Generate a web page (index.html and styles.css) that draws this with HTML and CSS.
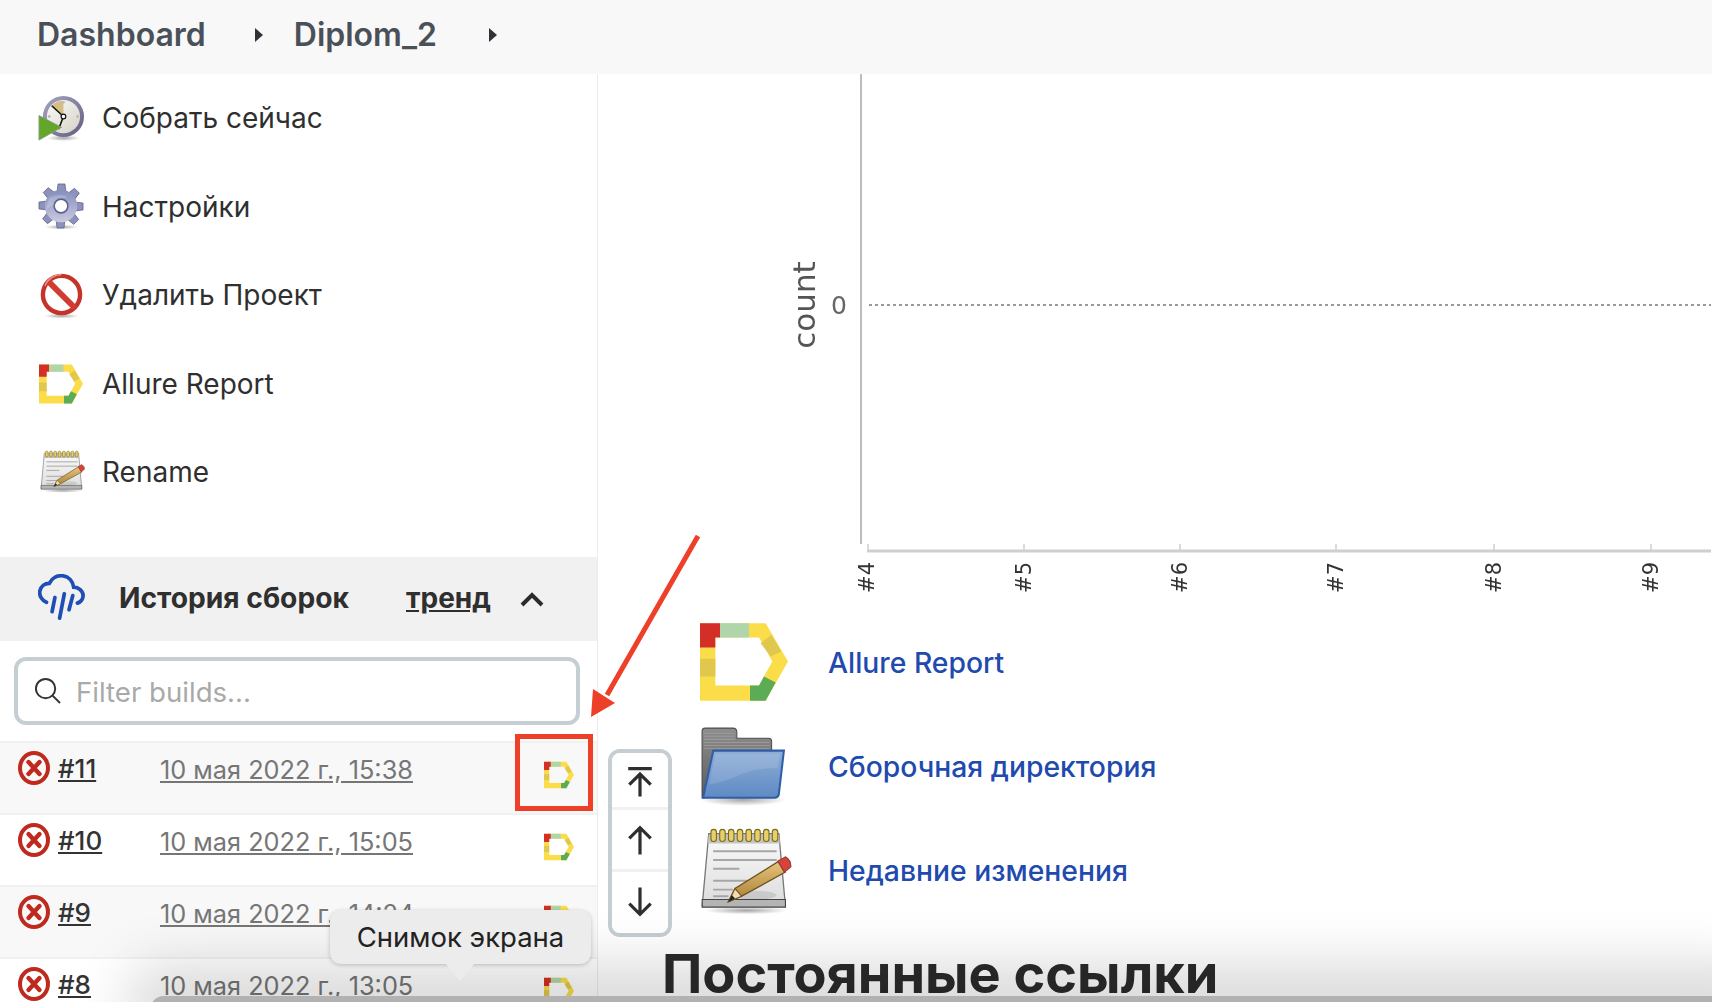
FILE: index.html
```html
<!DOCTYPE html>
<html lang="ru">
<head>
<meta charset="utf-8">
<title>Diplom_2</title>
<link rel="stylesheet" href="styles.css">
</head>
<body>
<svg class="defs" width="0" height="0" aria-hidden="true">
  <defs>
    <linearGradient id="gFace" x1="0" y1="0" x2="1" y2="1"><stop offset="0" stop-color="#fbfbf8"/><stop offset="1" stop-color="#d5d2c6"/></linearGradient>
    <linearGradient id="gRing" x1="0" y1="0" x2="1" y2="1"><stop offset="0" stop-color="#a9a6c4"/><stop offset="1" stop-color="#5f5c80"/></linearGradient>
    <linearGradient id="gGear" x1="0" y1="0" x2="0" y2="1"><stop offset="0" stop-color="#858fba"/><stop offset=".55" stop-color="#aaaed2"/><stop offset="1" stop-color="#cbc9dc"/></linearGradient>
    <linearGradient id="gPaper" x1="0" y1="0" x2="0" y2="1"><stop offset="0" stop-color="#fafafa"/><stop offset="1" stop-color="#dcdcdc"/></linearGradient>
    <linearGradient id="gPencil" x1="0" y1="0" x2="0" y2="1"><stop offset="0" stop-color="#e8c47c"/><stop offset="1" stop-color="#a97f35"/></linearGradient>
    <linearGradient id="gFolder" x1="0" y1="0" x2="0" y2="1"><stop offset="0" stop-color="#8eaed6"/><stop offset="1" stop-color="#5f8ac4"/></linearGradient>
    <linearGradient id="gBack" x1="0" y1="0" x2="0" y2="1"><stop offset="0" stop-color="#8e8e8e"/><stop offset="1" stop-color="#5a5a5a"/></linearGradient>
    <radialGradient id="gShadow"><stop offset="0" stop-color="#000" stop-opacity=".35"/><stop offset="1" stop-color="#000" stop-opacity="0"/></radialGradient>

    <symbol id="i-allure" viewBox="0 0 264 233">
      <path fill="#fbdd4a" fill-rule="evenodd" d="M0 0H197L264 115 197 233H0ZM46 43V187H177L217 115 177 43Z"/>
      <path fill="#dfc84d" d="M0 107H46V160H0ZM182 60 214 35 244 85 212 100Z"/>
      <path fill="#5bac55" d="M150 187H177L192 160 227 178 197 233H150Z"/>
      <path fill="#b0d5ab" d="M60 0H147V43H60Z"/>
      <path fill="#d32f26" d="M0 0H60V43H46V73H0Z"/>
    </symbol>

    <symbol id="i-clock" viewBox="0 0 48 48">
      <ellipse cx="26" cy="44" rx="17" ry="3" fill="url(#gShadow)"/>
      <circle cx="26" cy="22" r="21" fill="url(#gRing)"/>
      <circle cx="26" cy="22" r="17" fill="url(#gFace)"/>
      <path d="M26 22 14 11A16 16 0 0 1 26 6Z" fill="#d6bd84"/>
      <circle cx="26" cy="7.500" r="1.500" fill="#bbb"/><circle cx="40.500" cy="22" r="1.500" fill="#bbb"/><circle cx="11.500" cy="22" r="1.500" fill="#bbb"/>
      <path d="M26 22 14 11M26 22 21 35" stroke="#111" stroke-width="1.600" fill="none"/>
      <circle cx="26" cy="22" r="2.400" fill="#fff" stroke="#111" stroke-width="1.200"/>
      <path d="M1 21V46L24 33Z" fill="#62a62a" stroke="#8a9e7a" stroke-width="1"/>
    </symbol>

    <symbol id="i-gear" viewBox="0 0 48 48">
      <ellipse cx="24" cy="45" rx="17" ry="2.500" fill="url(#gShadow)"/>
      <path id="tooth" d="M20.500 1H27.500L28.500 9H19.500Z" fill="#8c92ba" stroke="#5d628c" stroke-width=".8"/>
      <use href="#tooth" transform="rotate(45 23.500 23.500)"/>
      <use href="#tooth" transform="rotate(90 23.500 23.500)"/>
      <use href="#tooth" transform="rotate(135 23.500 23.500)"/>
      <use href="#tooth" transform="rotate(180 23.500 23.500)"/>
      <use href="#tooth" transform="rotate(225 23.500 23.500)"/>
      <use href="#tooth" transform="rotate(270 23.500 23.500)"/>
      <use href="#tooth" transform="rotate(315 23.500 23.500)"/>
      <circle cx="23.500" cy="23.500" r="16.500" fill="url(#gGear)"/>
      <path d="M12 15Q22 10 30 14 24 16 20 22 14 22 9 27Q9 20 12 15Z" fill="#fff" opacity=".2"/>
      <circle cx="23.500" cy="23.500" r="7" fill="#fff" stroke="#5d628c" stroke-width="1.600"/>
    </symbol>

    <symbol id="i-ban" viewBox="0 0 48 48">
      <ellipse cx="24" cy="45" rx="18" ry="2.500" fill="url(#gShadow)"/>
      <circle cx="24" cy="23" r="19" fill="#fff" stroke="#c5342a" stroke-width="4.500"/>
      <path d="M10 9 38 37" stroke="#d23c30" stroke-width="6"/>
      <path d="M7 14A19 19 0 0 1 24 2.500" stroke="#ea9a92" stroke-width="1.400" fill="none"/>
    </symbol>

    <symbol id="i-note" viewBox="0 0 84 80">
      <ellipse cx="42" cy="76" rx="38" ry="3.500" fill="url(#gShadow)"/>
      <path d="M8 6H72L78 72H2Z" fill="url(#gPaper)" stroke="#777" stroke-width="1.200"/>
      <path d="M2 66H78V73H2Z" fill="#b4b4b4" stroke="#444" stroke-width="1"/>
      <path d="M8 7H72L73 15H7Z" fill="#c4c4c4"/>
      <g fill="#e7cf6a" stroke="#7c6a17" stroke-width="1">
        <rect x="10" y="2" width="5" height="11" rx="2.500"/><rect x="18" y="2" width="5" height="11" rx="2.500"/><rect x="26" y="2" width="5" height="11" rx="2.500"/><rect x="34" y="2" width="5" height="11" rx="2.500"/><rect x="42" y="2" width="5" height="11" rx="2.500"/><rect x="50" y="2" width="5" height="11" rx="2.500"/><rect x="58" y="2" width="5" height="11" rx="2.500"/><rect x="66" y="2" width="5" height="11" rx="2.500"/>
      </g>
      <path d="M12 22H70M12 30H70M12 38H36M12 49H44M12 57H30M12 63H26" stroke="#a6a6a6" stroke-width="1.800"/>
      <ellipse cx="50" cy="62" rx="20" ry="4" fill="#000" opacity=".1"/>
      <path d="M26 68 32 56 72 31 78 41 38 63Z" fill="url(#gPencil)" stroke="#6c5320" stroke-width="1.200"/>
      <path d="M26 68 32 56 38 63Z" fill="#f0dcb0" stroke="#6c5320" stroke-width="1"/>
      <path d="M26 68 29 62 32 65Z" fill="#222"/>
      <path d="M71 31 78 27Q83 30 83 36L77 41Z" fill="#d9423a" stroke="#8e3a30" stroke-width="1"/>
    </symbol>

    <symbol id="i-folder" viewBox="0 0 86 78">
      <ellipse cx="42" cy="71" rx="42" ry="6" fill="url(#gShadow)"/>
      <path d="M2 4Q2 1 5 1H32Q36 1 36 5V11H67Q70 11 70 14V24H16L6 69H2Z" fill="url(#gBack)" stroke="#4c4c4c" stroke-width="1"/>
      <path d="M4 6H34M4 9H34M4 12H34M4 15H68M4 18H68M4 21H68" stroke="#a8a8a8" stroke-width="1" opacity=".6"/>
      <path d="M13 23H82L77 66Q76 69 73 69H3Z" fill="url(#gFolder)" stroke="#2f5ea7" stroke-width="2"/>
      <path d="M15 26H78L76 40Q50 40 36 48 22 54 9 56Z" fill="#fff" opacity=".12"/>
    </symbol>

    <symbol id="i-rain" viewBox="0 0 50 50">
      <path d="M9 30C4 28 1 23 2 18 3 13 7 10 12 10 15 4 21 1 27 2 33 3 37 8 38 14 43 14 48 18 48 23 48 27 45 30 42 31" fill="none" stroke="#1f4fb5" stroke-width="4" stroke-linecap="round"/>
      <path d="M18 25 15 40M28 21 23 47M37 23 33 38" fill="none" stroke="#1f4fb5" stroke-width="4" stroke-linecap="round"/>
    </symbol>

    <symbol id="i-fail" viewBox="0 0 32 34">
      <ellipse cx="16" cy="17" rx="14" ry="15" fill="none" stroke="#bf2a1e" stroke-width="4"/>
      <path d="M10.500 11 21.500 23M21.500 11 10.500 23" stroke="#bf2a1e" stroke-width="4.400" stroke-linecap="round"/>
    </symbol>
  </defs>
</svg>

<header class="crumbs">
  <a class="crumb">Dashboard</a><span class="caret"></span>
  <a class="crumb">Diplom_2</a><span class="caret"></span>
</header>

<div class="layout">
  <aside class="side">
    <nav class="tasks">
      <a class="task"><span class="task-icon"><svg class="ico-44"><use href="#i-clock"/></svg></span>Собрать сейчас</a>
      <a class="task"><span class="task-icon"><svg class="ico-44"><use href="#i-gear"/></svg></span>Настройки</a>
      <a class="task"><span class="task-icon"><svg class="ico-44"><use href="#i-ban"/></svg></span>Удалить Проект</a>
      <a class="task"><span class="task-icon"><svg class="ico-allure-m"><use href="#i-allure"/></svg></span>Allure Report</a>
      <a class="task"><span class="task-icon"><svg class="ico-note-s"><use href="#i-note"/></svg></span>Rename</a>
    </nav>

    <section class="hist">
      <div class="hist-head">
        <svg class="ico-rain"><use href="#i-rain"/></svg>
        <span class="hist-title">История сборок</span>
        <a class="hist-trend">тренд</a>
        <svg class="ico-chev" viewBox="0 0 26 16"><path d="M3 14 13 4 23 14" fill="none" stroke="#2b2b2b" stroke-width="4"/></svg>
      </div>
      <div class="search">
        <svg class="ico-search" viewBox="0 0 28 28"><circle cx="12" cy="12" r="10" fill="none" stroke="#333" stroke-width="2"/><path d="M19 19 27 27" stroke="#333" stroke-width="2"/></svg>
        <span class="search-ph">Filter builds...</span>
      </div>
      <div class="build odd">
        <svg class="ico-fail"><use href="#i-fail"/></svg><a class="b-num">#11</a><a class="b-date">10 мая 2022 г., 15:38</a><svg class="ico-allure-s"><use href="#i-allure"/></svg>
      </div>
      <div class="build">
        <svg class="ico-fail"><use href="#i-fail"/></svg><a class="b-num">#10</a><a class="b-date">10 мая 2022 г., 15:05</a><svg class="ico-allure-s"><use href="#i-allure"/></svg>
      </div>
      <div class="build odd">
        <svg class="ico-fail"><use href="#i-fail"/></svg><a class="b-num">#9</a><a class="b-date">10 мая 2022 г., 14:24</a><svg class="ico-allure-s"><use href="#i-allure"/></svg>
      </div>
      <div class="build">
        <svg class="ico-fail"><use href="#i-fail"/></svg><a class="b-num">#8</a><a class="b-date">10 мая 2022 г., 13:05</a><svg class="ico-allure-s"><use href="#i-allure"/></svg>
      </div>
    </section>
  </aside>

  <main class="main">
    <svg class="chart" viewBox="0 0 931 537">
      <path class="axis-y" d="M81 0V470"/>
      <path class="axis-x" d="M87 477H931"/>
      <path class="ticks" d="M88 470V478M244 470V478M400 470V478M556 470V478M714 470V478M871 470V478"/>
      <path class="zero" d="M89 231H931"/>
      <text class="c-title" transform="translate(35 231) rotate(-90)">count</text>
      <text class="c-zero" x="59" y="240">0</text>
      <text class="c-tick" transform="translate(94 488) rotate(-90)">#4</text>
      <text class="c-tick" transform="translate(251 488) rotate(-90)">#5</text>
      <text class="c-tick" transform="translate(407 488) rotate(-90)">#6</text>
      <text class="c-tick" transform="translate(563 488) rotate(-90)">#7</text>
      <text class="c-tick" transform="translate(721 488) rotate(-90)">#8</text>
      <text class="c-tick" transform="translate(878 488) rotate(-90)">#9</text>
    </svg>

    <div class="lower">
      <div class="jump">
        <button class="jump-btn" aria-label="top"><svg viewBox="0 0 28 30"><path d="M3 3H25M14 29V9M4 18 14 8 24 18" fill="none" stroke="#2f2f2f" stroke-width="3"/></svg></button>
        <button class="jump-btn" aria-label="up"><svg viewBox="0 0 28 30"><path d="M14 29V5M4 14 14 4 24 14" fill="none" stroke="#2f2f2f" stroke-width="3"/></svg></button>
        <button class="jump-btn" aria-label="down"><svg viewBox="0 0 28 30"><path d="M14 1V25M4 16 14 26 24 16" fill="none" stroke="#2f2f2f" stroke-width="3"/></svg></button>
      </div>
      <div class="links">
        <a class="link"><span class="link-icon"><svg class="ico-allure-l"><use href="#i-allure"/></svg></span>Allure Report</a>
        <a class="link"><span class="link-icon"><svg class="ico-folder"><use href="#i-folder"/></svg></span>Сборочная директория</a>
        <a class="link"><span class="link-icon"><svg class="ico-note"><use href="#i-note"/></svg></span>Недавние изменения</a>
      </div>
    </div>
    <h2 class="perma">Постоянные ссылки</h2>
  </main>
</div>

<div class="tip">Снимок экрана</div>
<div class="mark"></div>
<svg class="arrow" viewBox="0 0 130 200"><path d="M107 3 16 162" fill="none" stroke="#ee4028" stroke-width="5"/><path d="M0 184 2 156 24 170Z" fill="#ee4028"/></svg>
<div class="window-edge"></div>
</body>
</html>
```

FILE: styles.css
```css
* { box-sizing: border-box; }
html, body { margin: 0; height: 100%; }
body {
  width: 1712px;
  height: 1002px;
  overflow: hidden;
  position: relative;
  background: #fff;
  color: #2f2f2f;
  font-family: Inter, "Noto Sans", sans-serif;
}
.defs { position: absolute; }

/* Breadcrumb */
.crumbs {
  height: 74px;
  background: #f8f8f8;
  display: flex;
  align-items: center;
  padding: 0 0 5px 37px;
}
.crumb { font-size: 32px; font-weight: 600; color: #4a5058; }
.caret {
  width: 0; height: 0;
  margin: 0 31px 0 49px;
  border-left: 8px solid #2f3338;
  border-top: 7px solid transparent;
  border-bottom: 7px solid transparent;
}
.caret:last-child { margin-left: 52px; }

.layout { display: flex; height: 928px; }

/* Sidebar */
.side { width: 598px; flex: none; border-right: 1px solid #ececec; }
.task {
  height: 88.500px;
  display: flex;
  align-items: center;
  font-size: 28px;
  color: #2f2f2f;
}
.task-icon { width: 102px; flex: none; display: flex; justify-content: flex-end; padding-right: 17px; }
.ico-44 { width: 47px; height: 47px; }
.ico-allure-m { width: 44px; height: 40px; margin-right: 2px; }
.ico-note-s { width: 45px; height: 45px; margin-top: -2px; }

.hist { margin-top: 40px; }
.hist-head {
  height: 84px;
  background: #f1f1f1;
  display: flex;
  align-items: center;
  padding: 0 0 2px 38px;
}
.ico-rain { width: 47px; height: 47px; flex: none; margin-right: 34px; }
.hist-title { font-size: 28.200px; font-weight: 700; color: #2f2f2f; width: 287px; flex: none; }
.hist-trend { font-size: 28px; font-weight: 700; text-decoration: underline; width: 113px; flex: none; }
.ico-chev { width: 26px; height: 16px; margin-top: 2px; }

.search {
  margin: 16px 17px 16px 14px;
  height: 68px;
  border: 4px solid #c5ced2;
  border-radius: 12px;
  display: flex;
  align-items: center;
  padding-left: 16px;
  background: #fff;
}
.ico-search { width: 27px; height: 27px; flex: none; margin-right: 15px; }
.search-ph { font-size: 27.600px; color: #a9a9a9; margin-top: 3px; }

.build {
  height: 72px;
  display: flex;
  align-items: flex-start;
  padding: 8px 0 0 18px;
  background: #fff;
  border-top: 2px solid #f1f1f1;
  position: relative;
}
.build.odd { background: #f8f8f8; }
.ico-fail { width: 32px; height: 34px; flex: none; margin-right: 8px; }
.b-num { width: 102px; flex: none; font-size: 26px; font-weight: 500; color: #333; text-decoration: underline; margin-top: 2px; }
.b-date { width: 386px; flex: none; font-size: 25.300px; color: #767676; text-decoration: underline; margin-top: 3px; }
.ico-allure-s { width: 30px; height: 28px; position: absolute; left: 544px; top: 18px; }

/* Main */
.main { flex: 1; min-width: 0; position: relative; }
.chart { display: block; width: 931px; height: 537px; margin-left: 182px; filter: blur(.4px); }
.axis-y { stroke: #bdbdbd; stroke-width: 2; fill: none; }
.axis-x { stroke: #cfcfcf; stroke-width: 3; fill: none; }
.ticks { stroke: #cfcfcf; stroke-width: 1.500; fill: none; }
.zero { stroke: #9a9a9a; stroke-width: 2; stroke-dasharray: 3 3; fill: none; }
.c-title { font-family: "DejaVu Sans", sans-serif; font-size: 31px; fill: #555; text-anchor: middle; }
.c-zero { font-family: "DejaVu Sans", sans-serif; font-size: 25px; fill: #666; text-anchor: middle; }
.c-tick { font-family: "DejaVu Sans", sans-serif; font-size: 21px; fill: #333; text-anchor: end; }

.lower { display: flex; align-items: flex-start; padding-left: 10px; }
.jump {
  width: 64px;
  flex: none;
  margin-top: 138px;
  border: 4px solid #c5ced2;
  border-radius: 12px;
  background: #fff;
  display: flex;
  flex-direction: column;
  overflow: hidden;
}
.jump-btn {
  height: 62px;
  padding: 0;
  border: 0;
  border-top: 3px solid #f1f1f1;
  background: #fff;
  display: flex;
  align-items: center;
  justify-content: center;
}
.jump-btn:first-child { border-top: 0; height: 54px; padding-top: 3px; }
.jump-btn:last-child { height: 64px; }
.jump-btn svg { width: 30px; height: 33px; }
.links { display: flex; flex-direction: column; }
.link {
  height: 104px;
  display: flex;
  align-items: center;
  font-size: 28.300px;
  font-weight: 500;
  color: #1f4aae;
}
.link-icon { width: 156px; flex: none; padding-left: 28px; display: flex; align-items: center; }
.ico-allure-l { width: 88px; height: 80px; margin-top: -2px; }
.ico-folder { width: 88px; height: 80px; }
.ico-note { width: 92px; height: 88px; }
.perma {
  margin: 0;
  position: absolute;
  left: 64px;
  top: 864px;
  font-size: 54px;
  line-height: 72px;
  font-weight: 700;
  color: #2b2b2b;
  white-space: nowrap;
}

/* Annotation and overlays */
.tip {
  position: absolute;
  left: 330px;
  top: 910px;
  width: 261px;
  height: 54px;
  background: #ececec;
  border-radius: 11px;
  box-shadow: 0 1px 4px rgba(0,0,0,.22);
  display: flex;
  align-items: center;
  justify-content: center;
  font-size: 27.500px;
  color: #222;
  z-index: 5;
}
.tip::after {
  content: "";
  position: absolute;
  left: 116px;
  top: 54px;
  border-left: 14px solid transparent;
  border-right: 14px solid transparent;
  border-top: 17px solid #ececec;
}
.mark {
  position: absolute;
  left: 515px;
  top: 734px;
  width: 78px;
  height: 77px;
  border: 5px solid #ee4028;
  z-index: 3;
}
.arrow {
  position: absolute;
  left: 591px;
  top: 533px;
  width: 130px;
  height: 200px;
  z-index: 3;
  overflow: visible;
}
.window-edge {
  position: absolute;
  left: 150px;
  right: -40px;
  top: 996px;
  height: 30px;
  background: #b2b2b2;
  border-radius: 14px;
  box-shadow: 0 -8px 55px 24px rgba(0,0,0,.15);
  z-index: 4;
}
```
